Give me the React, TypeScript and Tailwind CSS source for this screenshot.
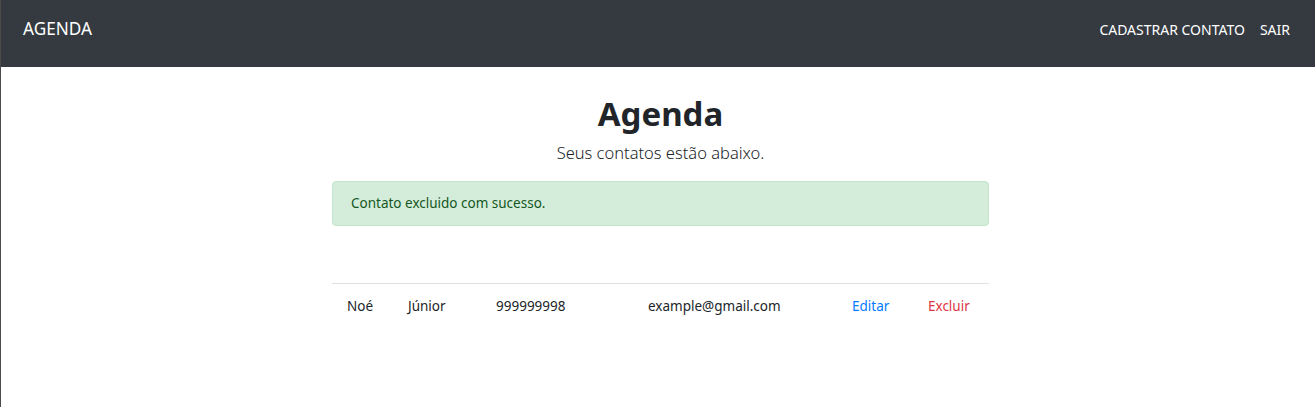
const contatos = [
  { nome: "Noé", sobrenome: "Júnior", telefone: "999999998", email: "example@gmail.com" },
];

export default function App() {
  return (
    <div className="min-h-[407px] border-l border-[#4a4a4a] bg-white text-[#212529] font-['Segoe_UI','Noto_Sans',sans-serif]">
      {/* Navbar */}
      <nav className="flex h-[67px] items-start justify-between bg-[#343a40] pl-[22px] pr-[25px] pt-[15px]">
        <a className="text-[17.2px] leading-[27px] text-white">AGENDA</a>
        <div className="flex gap-[15px] pt-[4px] text-[14px] leading-[21px] text-white">
          <a>CADASTRAR CONTATO</a>
          <a>SAIR</a>
        </div>
      </nav>

      <main className="ml-[331px] w-[657px] pt-[23px]">
        <h1 className="text-center text-[33px] font-bold leading-[48px]">Agenda</h1>
        <p className="mt-[2px] text-center text-[16.5px] font-light leading-[26px]">Seus contatos estão abaixo.</p>

        <div className="mt-[15px] rounded-[4px] border border-[#c3e6cb] bg-[#d4edda] px-[18px] py-[11px] text-[13.5px] leading-[21px] text-[#155724]">
          Contato excluido com sucesso.
        </div>

        {/* Tabela de contatos */}
        <div className="mt-[57px] border-t border-[#dee2e6] text-[13.5px] leading-[21px]">
          {contatos.map((c) => (
            <div key={c.telefone} className="grid grid-cols-[61px_88px_152px_204px_76px_76px] py-[12px]">
              <span className="pl-[15px]">{c.nome}</span>
              <span className="pl-[15px]">{c.sobrenome}</span>
              <span className="pl-[15px]">{c.telefone}</span>
              <span className="pl-[15px]">{c.email}</span>
              <a className="pl-[15px] text-[#007bff]">Editar</a>
              <a className="pl-[15px] text-[#dc3545]">Excluir</a>
            </div>
          ))}
        </div>
      </main>
    </div>
  );
}
